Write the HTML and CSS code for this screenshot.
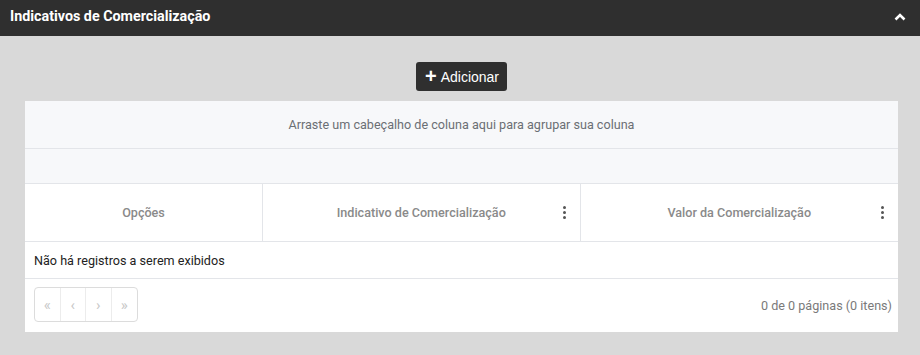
FILE: index.html
```html
<!DOCTYPE html>
<html lang="pt-BR">
<head>
    <meta charset="UTF-8">
    <title>Indicativos de Comercialização</title>
    <link rel="stylesheet" href="styles.css">
</head>
<body>
    <div class="panel">
        <div class="panel-header">
            <span class="panel-title">Indicativos de Comercialização</span>
            <svg class="chevron" width="12" height="8" viewBox="0 0 12 8">
                <path d="M1.5 6.5 L6 2 L10.5 6.5" fill="none" stroke="#fff" stroke-width="2.6"/>
            </svg>
        </div>
        <div class="panel-body">
            <div class="actions">
                <button class="btn-add"><span class="plus">+</span> Adicionar</button>
            </div>

            <div class="grid">
                <div class="group-panel">Arraste um cabeçalho de coluna aqui para agrupar sua coluna</div>
                <div class="filter-row"></div>
                <div class="header-row">
                    <div class="header-cell">Opções</div>
                    <div class="header-cell">
                        Indicativo de Comercialização
                        <span class="kebab"><i></i><i></i><i></i></span>
                    </div>
                    <div class="header-cell">
                        Valor da Comercialização
                        <span class="kebab"><i></i><i></i><i></i></span>
                    </div>
                </div>
                <div class="empty-row">Não há registros a serem exibidos</div>
                <div class="pager">
                    <div class="pager-buttons">
                        <span class="pager-btn">&laquo;</span>
                        <span class="pager-btn">&lsaquo;</span>
                        <span class="pager-btn">&rsaquo;</span>
                        <span class="pager-btn">&raquo;</span>
                    </div>
                    <div class="pager-info">0 de 0 páginas (0 itens)</div>
                </div>
            </div>
        </div>
    </div>
</body>
</html>
```

FILE: styles.css
```css
body {
    margin: 0;
    font-family: Roboto, "Noto Sans", sans-serif;
    background: #fff;
}
.panel {
    width: 920px;
    height: 355px;
    background-color: #d9d9d9;
}
.panel-header {
    height: 36px;
    background-color: #2f2f2f;
    display: flex;
    align-items: center;
    justify-content: space-between;
    padding: 0 14px 0 10px;
}
.panel-title {
    color: #fff;
    font-weight: bold;
    font-size: 14.3px;
    margin-top: -4px;
}
.chevron {
    margin-top: -2px;
}
.panel-body {
    padding: 26px 22px 0 25px;
}
.actions {
    display: flex;
    justify-content: center;
    margin-bottom: 10px;
}
.btn-add {
    height: 29px;
    padding: 0 8px 0 9px;
    background-color: #2f2f2f;
    color: #fff;
    border: none;
    border-radius: 3px;
    font-family: "Liberation Sans", Arial, sans-serif;
    font-size: 14px;
    display: flex;
    align-items: center;
    gap: 4px;
}
.plus {
    font-size: 20px;
    font-weight: bold;
    line-height: 1;
    margin-top: -2px;
}
.grid {
    background-color: #fff;
    font-size: 12.6px;
}
.group-panel {
    height: 47px;
    background-color: #f7f8fa;
    border-bottom: 1px solid #e3e5e9;
    display: flex;
    align-items: center;
    justify-content: center;
    color: #6b6f74;
}
.filter-row {
    height: 34px;
    background-color: #f7f8fa;
    border-bottom: 1px solid #e3e5e9;
}
.header-row {
    display: grid;
    grid-template-columns: 238px 1fr 1fr;
    height: 57px;
    border-bottom: 1px solid #e3e5e9;
}
.header-cell {
    position: relative;
    display: flex;
    align-items: center;
    justify-content: center;
    color: #8a8a8a;
    font-weight: 500;
    border-right: 1px solid #e3e5e9;
}
.header-cell:last-child {
    border-right: none;
}
.kebab {
    position: absolute;
    right: 14px;
    top: 22px;
    display: flex;
    flex-direction: column;
    gap: 2px;
}
.kebab i {
    width: 3px;
    height: 3px;
    border-radius: 50%;
    background-color: #555;
}
.empty-row {
    height: 36px;
    display: flex;
    align-items: center;
    padding-left: 9px;
    color: #222;
    border-bottom: 1px solid #e3e5e9;
}
.pager {
    height: 53px;
    display: flex;
    align-items: center;
    justify-content: space-between;
    padding: 0 6px 0 9px;
}
.pager-buttons {
    display: flex;
    border: 1px solid #dcdcdc;
    border-radius: 4px;
    height: 33px;
    margin-top: -2px;
}
.pager-btn {
    box-sizing: border-box;
    width: 25.5px;
    display: flex;
    align-items: center;
    justify-content: center;
    color: #c8c8c8;
    font-size: 15px;
    border-right: 1px solid #ececec;
}
.pager-btn:last-child {
    border-right: none;
}
.pager-info {
    color: #7a7a7a;
}
```
